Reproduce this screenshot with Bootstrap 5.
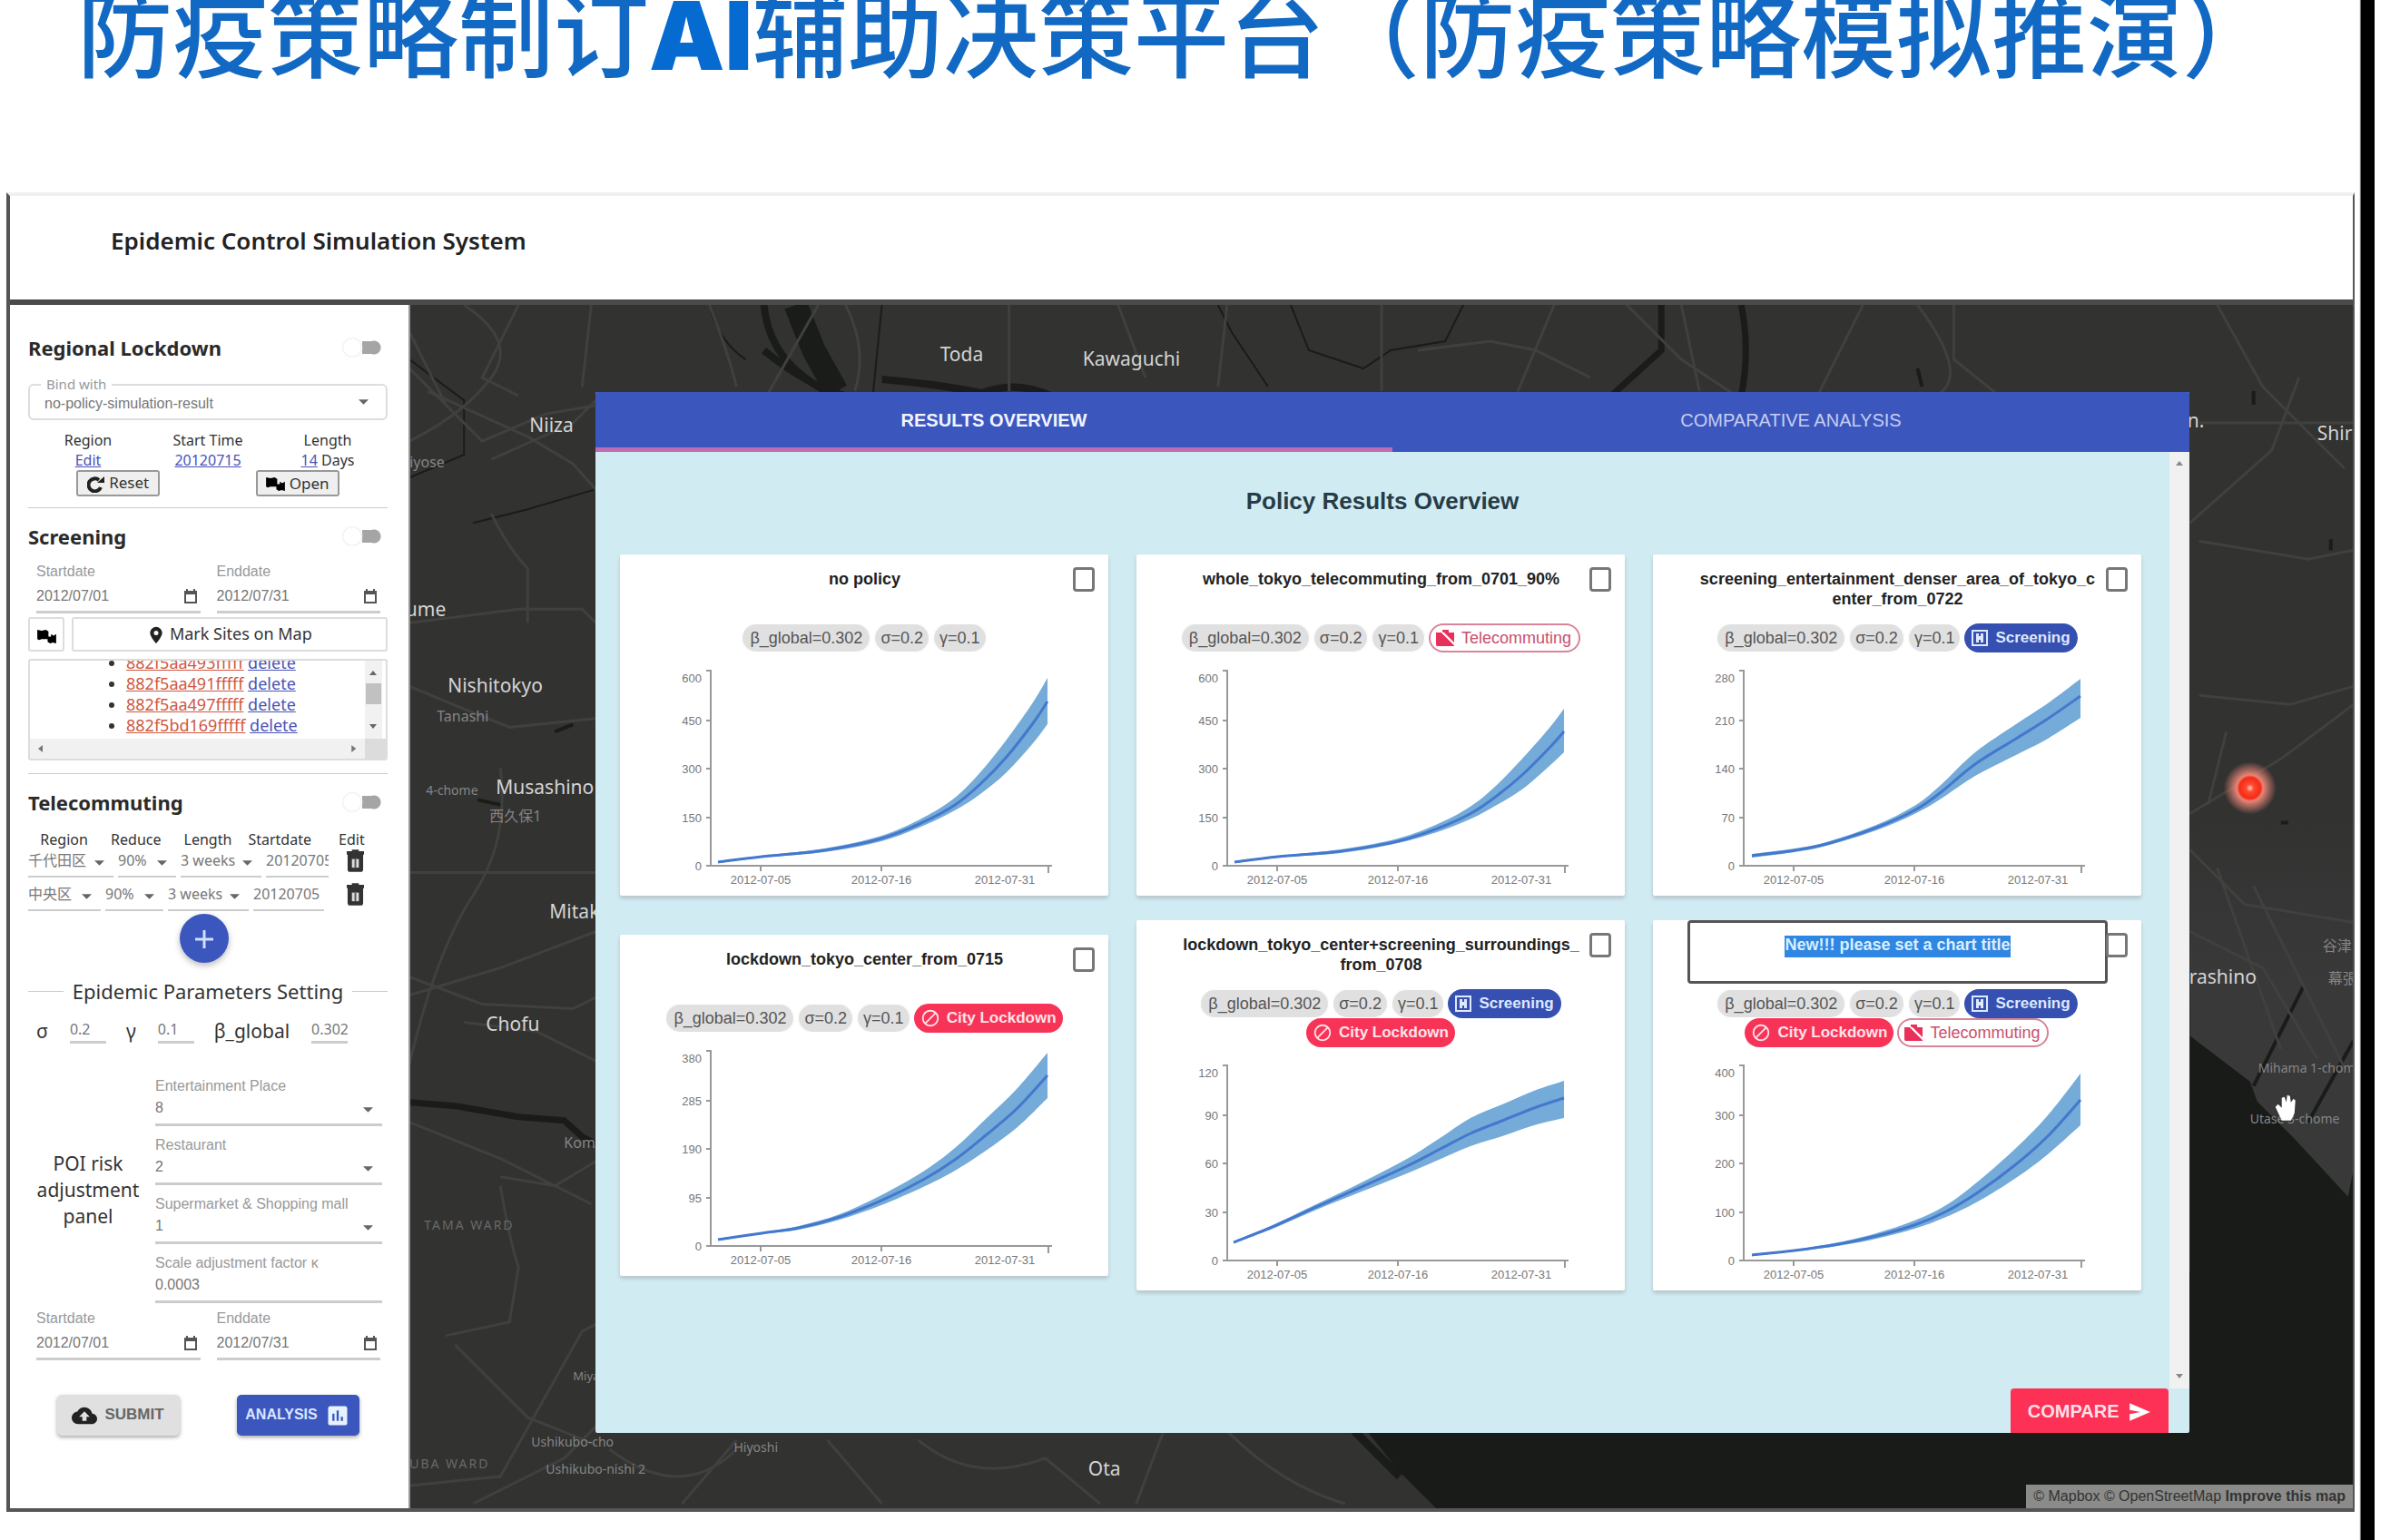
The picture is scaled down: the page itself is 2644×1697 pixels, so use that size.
<!DOCTYPE html>
<html lang="zh-CN">
<head>
<meta charset="utf-8">
<meta name="viewport" content="width=device-width, initial-scale=1">
<title>Epidemic Control Simulation System</title>
<link href="https://cdn.jsdelivr.net/npm/bootstrap@5.3.0/dist/css/bootstrap.min.css" rel="stylesheet">
<style>
:root{--indigo:#3b57be;--rose:#f73458;--ink:#333;--soft:#909090}
body{font-family:"Noto Sans","Noto Sans CJK JP",sans-serif;color:var(--ink);background:#fff}
.arial{font-family:"Liberation Sans","Noto Sans CJK JP",sans-serif}
.slide-edge{width:15px;background:#000;box-shadow:-1px 0 1px #777}
.slide-gutter{width:28px}
.slide-pad{padding:0 7px 31px}
.slide-title{height:212px;padding-left:78px;font-family:"Noto Sans CJK SC",sans-serif;font-size:105px;line-height:62px;font-weight:500;color:#1269c3;white-space:nowrap;margin:0}
.slide-title b{font-family:Inter,sans-serif;font-weight:900;color:#056bd0}
.app-frame{border:4px solid #555;border-top:4px solid #f0f0f0;border-right:2px solid #555}
.app-head{height:120px;padding:33px 111px 0;border-bottom:6px solid #4a4a4a}
.app-head h1{font-size:26px;line-height:32px;font-weight:600;color:#222;margin:0}
.side{width:441px;padding:32px 23px 0 20px;border-right:2px solid #999;background:#fff}
.side h2{font-size:22px;line-height:30px;font-weight:700;color:#2a2a2a;margin:0}
.side hr{margin:0;border-top:1px solid #ccc;opacity:1}
.tog{appearance:none;width:44px;height:22px;margin:0 6px 0 0;background:
 radial-gradient(circle at 11px 11px,#fff 9px,#f1f1f1 10px,transparent 12px),
 linear-gradient(#a5a5a5,#a5a5a5) 22px 4px/14px 14px no-repeat,
 radial-gradient(circle at 35px 11px,#a5a5a5 7px,transparent 8px)}
.bind{height:40px;border:2px solid #ddd;border-radius:6px;margin-top:25px}
.bind label{position:absolute;top:-13px;left:12px;padding:0 6px;background:#fff;font-size:15px;line-height:22px;color:#999}
.bind select{width:100%;height:36px;padding:4px 16px 0;font-size:16px}
select,.side input[type=text]{border:0;border-radius:0;background-color:transparent;color:#777;outline:0;min-width:0}
select{appearance:none;background:url("data:image/svg+xml,%3Csvg xmlns='http://www.w3.org/2000/svg' viewBox='0 0 12 6'%3E%3Cpath fill='%23666' d='M0 0h12L6 6z'/%3E%3C/svg%3E") no-repeat right 10px center/11px 6px}
.bind select{background-position:right 19px center}
.t16{font-size:16px;line-height:22px}
.side a{color:#4a52b8}
.raw-btn{height:29px;width:92px;font-size:17px;line-height:20px;background:#efefef;border:2px solid #999;border-radius:3px;padding:0;color:#333}
.flabel{font-size:16px;line-height:20px;color:#999;display:block}
.uline{border-bottom:3px solid #ccc!important}
.date-in{height:36px}
.date-in input,.poi-in{font-size:16px}
.tool-btn{height:38px;border:2px solid #ddd;border-radius:3px;background:#fff;font-size:18px;line-height:22px;color:#333}
.sites{height:112px;border:2px solid #ddd;border-radius:3px;display:grid;grid-template:1fr 22px/1fr 23px}
.sites ul{margin:-9px 0 0;padding-left:106px;font-size:18px;line-height:23px;color:#333;white-space:nowrap}
.sites ul a:first-child{color:#d0583f}
.bar-bg{background:#f1f1f1}
.thead5{display:grid;grid-template-columns:repeat(5,1fr);text-align:center;margin-top:15px}
.tele{height:31px;gap:5px;margin-bottom:6px;padding-right:26px}
.tele select,.tele input{height:31px;padding:0 0 5px;font-size:16px;border-bottom:2px solid #ccc!important}
.tele .w-r4{width:94px}.tele .w-r3{width:80px}.tele .w-p{width:64px}.tele .w-w{width:89px}.tele .w-d{width:69px}.tele .w-d2{width:78px}
.fab{width:54px;height:54px;border-radius:50%;background:var(--indigo);border:0;box-shadow:0 3px 7px #bbb;margin:-3px 0 0}
.split{font-size:22px;line-height:30px;gap:10px;margin-top:13px}
.split i{flex:1;height:1px;background:#ccc}
.parm{margin-top:14px;height:30px;font-size:21px;line-height:30px;padding-left:9px}
.parm input{width:40px;height:29px;padding:0;font-size:16px;margin:0 22px 0 24px}
.poi{margin-top:36px;padding-right:6px}
.poi-name{width:132px;margin-right:8px;font-size:21px;line-height:29px}
.poi-in{height:34px;width:100%;padding:0 0 4px}
.act{height:45px;width:135px;border:0;border-radius:5px;font-size:17px;line-height:20px;font-weight:700;box-shadow:0 2px 4px #aaa}
.map{background:#323231;padding:96px 180px 83px 204px}
.map-art{position:absolute;inset:0;width:100%;height:100%}
.dialog{background:#d1ebf3;border-radius:2px;overflow:hidden}
.tabs{height:66px;background:var(--indigo);font-family:"Liberation Sans",sans-serif}
.tabs button{flex:1;background:none;border:0;border-bottom:5px solid transparent;color:#c6cdf0;font-size:20px;line-height:24px;padding:0}
.tabs .on{border-color:#c06cb4;color:#f2f4ff;font-weight:700}
.over-title{font-family:"Liberation Sans",sans-serif;font-size:26px;line-height:34px;font-weight:700;color:#263c46;margin:37px 0 42px;text-align:center}
.deck{padding:0 31px 0 27px}
.deck .row{--bs-gutter-x:31px;--bs-gutter-y:27px}
.plan{background:#fff;border-radius:2px;box-shadow:0 3px 4px #b5c3c6}
.plan-name{width:463px;height:70px;margin:0 0 6px 38px;padding:16px 6px 0;font-family:"Liberation Sans",sans-serif;font-size:18px;line-height:22px;font-weight:700;color:#222;text-align:center;flex:none}
.plan-name.editing{border:3px solid #555;border-radius:4px;padding:13px 7px 0;outline:0}
.plan-name.editing span{background:#2f86e3;color:#d9efff;padding-bottom:4px}
.pick{appearance:none;width:24px;height:27px;margin:14px 16px 0 -2px;border:3px solid #777;border-radius:4px;background:#fff;flex:none}
.chip{display:inline-flex;align-items:center;height:32px;border-radius:16px;padding:0 7px;font-size:18px;line-height:22px;background:#e0e0e0;color:#555;box-shadow:inset 0 0 0 1px #fff}
.chip svg{margin-right:7px}
.chip.scr{background:#3550b0;color:#dfe8ff;font-weight:700;font-size:17px;box-shadow:none;padding-right:8px}
.chip.loc{background:var(--rose);color:#ffe3e8;font-weight:700;font-size:17px;box-shadow:none}
.chip.tel{background:#fff;color:#c9506d;box-shadow:inset 0 0 0 2px #d98498;padding-right:10px}
.chips{gap:0 4px}
.chips .chip:first-child{padding:0 9px}
.plot text{font:13px "Liberation Sans",sans-serif;fill:#777}
.rail{width:22px;flex:none;background:#f1f1f1;padding:9px 0}
.compare{width:174px;height:49px;margin-right:23px;border:0;border-radius:4px 4px 0 0;background:#fc3155;color:#ffdfe6;font-family:"Liberation Sans",sans-serif;font-weight:700;font-size:20px}
.attrib{position:absolute;right:0;bottom:0;height:26px;padding:0 8px;background:#8b8b89;color:#333;font-size:16px;line-height:26px}
.attrib a{color:inherit;text-decoration:none}
.map-art text{font-family:"Noto Sans","Noto Sans CJK JP",sans-serif}
</style>
</head>
<body>
<svg width="0" height="0" class="position-absolute" aria-hidden="true">
<symbol id="chat" viewBox="0 0 22 18"><path d="M0 1l5 1 5-1 3 2v6h3V6l3 2 3-2v11l-4-1-3 1-3-2v-3H5l-3 1-2-1z"/></symbol>
<symbol id="cal" viewBox="0 0 14 16"><path d="M2 0h2v2h6V0h2v2h2v14H0V2h2zM2 6v8h10V6z" fill-rule="evenodd"/></symbol>
<symbol id="bin" viewBox="0 0 20 26"><path fill="#333" d="M6 0h8v2h6v4H0V2h6zM1 6h18v17q0 3-3 3H4q-3 0-3-3z"/><path fill="#ddd" d="M6 11h8v10H6z"/><path stroke="#555" stroke-width="2" d="M10 11v10"/></symbol>
<symbol id="med" viewBox="0 0 20 20"><path fill="none" stroke="#dfe8ff" stroke-width="2" d="M2 2h16v16H2z"/><path fill="#dfe8ff" d="M6 5h3v3h2V5h3v10h-3v-3H9v3H6z"/></symbol>
<symbol id="blk" viewBox="0 0 24 24"><path fill="#ffe3e8" d="M12 2C6.48 2 2 6.48 2 12s4.48 10 10 10 10-4.48 10-10S17.520 2 12 2zM4 12c0-4.420 3.580-8 8-8 1.850 0 3.550.630 4.900 1.690L5.690 16.900C4.630 15.550 4 13.850 4 12zm8 8c-1.850 0-3.550-.630-4.900-1.690L18.310 7.100C19.370 8.450 20 10.150 20 12c0 4.420-3.580 8-8 8z"/></symbol>
<symbol id="off" viewBox="0 0 22 20"><path fill="#e8305a" d="M1 4h6l14 14v1H2q-1-1-1-2zM8 1h7v3h6v11L10 4H8z"/><path stroke="#fff" stroke-width="1.500" d="M4 0l18 18"/></symbol>
</svg>

<div class="d-flex min-vh-100">
<main class="slide-pad flex-grow-1 d-flex flex-column overflow-hidden">
 <p class="slide-title">防疫策略制订<b>AI</b>辅助决策平台（防疫策略模拟推演）</p>
 <div class="app-frame flex-grow-1 d-flex flex-column">
  <header class="app-head"><h1>Epidemic Control Simulation System</h1></header>
  <div class="d-flex flex-grow-1">

  <aside class="side flex-shrink-0">
   <div class="d-flex justify-content-between align-items-center"><h2>Regional Lockdown</h2><input type="checkbox" class="tog" aria-label="Regional Lockdown"></div>
   <div class="bind position-relative"><label for="bind">Bind with</label><select id="bind" class="arial"><option>no-policy-simulation-result</option></select></div>
   <div class="row g-0 text-center t16" style="margin-top:11px">
    <div class="col">Region<br><a href="#">Edit</a></div>
    <div class="col">Start Time<br><a href="#">20120715</a></div>
    <div class="col">Length<br><a href="#">14</a> Days</div>
   </div>
   <div class="row g-0 text-center mb-2 pb-1">
    <div class="col"><button class="raw-btn"><svg width="20" height="18" viewBox="0 0 20 18"><path d="M15 12a7 7 0 1 1-2-8" fill="none" stroke="#222" stroke-width="4"/><path d="M11 7h8V0z" fill="#222"/></svg> Reset</button></div>
    <div class="col"><button class="raw-btn"><svg width="21" height="17"><use href="#chat"/></svg> Open</button></div>
   </div>
   <hr>
   <div class="d-flex justify-content-between align-items-center mt-3"><h2>Screening</h2><input type="checkbox" class="tog" aria-label="Screening"></div>
   <div class="d-flex arial" style="gap:18px;padding:14px 8px 0 9px">
    <div class="w-50"><label class="flabel" for="s1">Startdate</label><div class="date-in uline d-flex align-items-center"><input type="text" id="s1" class="w-100 p-0" value="2012/07/01"><svg width="14" height="16" class="flex-shrink-0 me-1" fill="#555"><use href="#cal"/></svg></div></div>
    <div class="w-50"><label class="flabel" for="s2">Enddate</label><div class="date-in uline d-flex align-items-center"><input type="text" id="s2" class="w-100 p-0" value="2012/07/31"><svg width="14" height="16" class="flex-shrink-0 me-1" fill="#555"><use href="#cal"/></svg></div></div>
   </div>
   <div class="d-flex gap-2 mb-2 pt-1">
    <button class="tool-btn p-0" style="width:40px" aria-label="Comments"><svg width="21" height="17"><use href="#chat"/></svg></button>
    <button class="tool-btn flex-grow-1"><svg width="20" height="22" viewBox="0 0 24 24" fill="#222"><path d="M12 1C8 1 4 5 4 9c0 5 8 14 8 14s8-9 8-14c0-4-4-8-8-8zm0 11a3 3 0 1 1 0-6 3 3 0 0 1 0 6z"/></svg> Mark Sites on Map</button>
   </div>
   <div class="sites">
    <div class="overflow-hidden"><ul>
     <li><a href="#">882f5aa493fffff</a> <a href="#">delete</a></li>
     <li><a href="#">882f5aa491fffff</a> <a href="#">delete</a></li>
     <li><a href="#">882f5aa497fffff</a> <a href="#">delete</a></li>
     <li><a href="#">882f5bd169fffff</a> <a href="#">delete</a></li></ul></div>
    <svg class="bar-bg" width="19" height="86" fill="#666"><path d="M5 16h8l-4-5zM5 70h8l-4 5z"/><path fill="#c1c1c1" d="M1 25h17v23H1z"/></svg>
    <svg class="bar-bg" width="100%" height="22" fill="#777"><path d="M14 7v8l-5-4z"/><svg x="96%" overflow="visible"><path d="M0 7v8l5-4z"/></svg></svg>
    <div style="background:#dcdcdc"></div>
   </div>
   <hr style="margin-top:14px">
   <div class="d-flex justify-content-between align-items-center mt-3"><h2>Telecommuting</h2><input type="checkbox" class="tog" aria-label="Telecommuting"></div>
   <div class="thead5 t16"><span>Region</span><span>Reduce</span><span>Length</span><span>Startdate</span><span>Edit</span></div>
   <div class="tele d-flex"><select class="w-r4" aria-label="Region"><option>千代田区</option></select><select class="w-p" aria-label="Reduce"><option>90%</option></select><select class="w-w" aria-label="Length"><option>3 weeks</option></select><input type="text" class="w-d" aria-label="Startdate" value="20120705"><svg class="ms-auto" width="19" height="25"><use href="#bin"/></svg></div>
   <div class="tele d-flex"><select class="w-r3" aria-label="Region"><option>中央区</option></select><select class="w-p" aria-label="Reduce"><option>90%</option></select><select class="w-w" aria-label="Length"><option>3 weeks</option></select><input type="text" class="w-d2" aria-label="Startdate" value="20120705"><svg class="ms-auto" width="19" height="25"><use href="#bin"/></svg></div>
   <div class="text-center pe-2" style="height:54px"><button class="fab" aria-label="Add"><svg width="22" height="22" stroke="#cfe0ff" stroke-width="3"><path d="M11 1v20M1 11h20"/></svg></button></div>
   <div class="split d-flex align-items-center"><i></i>Epidemic Parameters Setting<i></i></div>
   <div class="parm d-flex"><label for="ps">σ</label><input class="uline" type="text" id="ps" value="0.2"><label for="pg">γ</label><input class="uline" type="text" id="pg" value="0.1"><label for="pb">β_global</label><input class="uline" type="text" id="pb" value="0.302"></div>
   <div class="poi d-flex align-items-center">
    <div class="poi-name text-center flex-shrink-0">POI risk adjustment panel</div>
    <div class="flex-grow-1 d-flex flex-column arial" style="gap:11px">
     <div><label class="flabel" for="p1">Entertainment Place</label><select id="p1" class="poi-in uline"><option>8</option></select></div>
     <div><label class="flabel" for="p2">Restaurant</label><select id="p2" class="poi-in uline"><option>2</option></select></div>
     <div><label class="flabel" for="p3">Supermarket &amp; Shopping mall</label><select id="p3" class="poi-in uline"><option>1</option></select></div>
     <div><label class="flabel" for="p4">Scale adjustment factor κ</label><input type="text" id="p4" class="poi-in uline d-block" value="0.0003"></div>
    </div>
   </div>
   <div class="d-flex arial" style="gap:18px;padding:7px 8px 0 9px">
    <div class="w-50"><label class="flabel" for="e1">Startdate</label><div class="date-in uline d-flex align-items-center"><input type="text" id="e1" class="w-100 p-0" value="2012/07/01"><svg width="14" height="16" class="flex-shrink-0 me-1" fill="#555"><use href="#cal"/></svg></div></div>
    <div class="w-50"><label class="flabel" for="e2">Enddate</label><div class="date-in uline d-flex align-items-center"><input type="text" id="e2" class="w-100 p-0" value="2012/07/31"><svg width="14" height="16" class="flex-shrink-0 me-1" fill="#555"><use href="#cal"/></svg></div></div>
   </div>
   <div class="row g-0 text-center arial" style="margin-top:38px">
    <div class="col"><button class="act" style="background:#e0e0e0;color:#666"><svg width="28" height="28" viewBox="0 0 24 24" fill="#222" class="me-2"><path d="M19.350 10.040C18.670 6.590 15.640 4 12 4 9.110 4 6.600 5.640 5.350 8.040 2.340 8.360 0 10.910 0 14c0 3.310 2.690 6 6 6h13c2.760 0 5-2.240 5-5 0-2.640-2.050-4.780-4.650-4.960zM14 13v4h-4v-4H7l5-5 5 5h-3z"/></svg>SUBMIT</button></div>
    <div class="col"><button class="act px-0" style="background:var(--indigo);color:#dbe5ff;font-size:16px">ANALYSIS<svg width="28" height="28" viewBox="0 0 24 24" fill="#e6f2ff" class="ms-2"><path d="M19 3H5c-1.100 0-2 .900-2 2v14c0 1.100.900 2 2 2h14c1.100 0 2-.900 2-2V5c0-1.100-.900-2-2-2zM9 17H7v-7h2v7zm4 0h-2V7h2v10zm4 0h-2v-4h2v4z"/></svg></button></div>
   </div>
  </aside>

  <section class="map flex-grow-1 position-relative d-flex overflow-hidden">
   <svg class="map-art" viewBox="0 0 2140 1325" preserveAspectRatio="xMidYMid slice">
    <linearGradient id="east" x2="0" y2="1"><stop offset="0" stop-color="#323231"/><stop offset=".4" stop-color="#393939"/></linearGradient>
    <path fill="url(#east)" d="M1960 560h181v460h-20l-160-210z"/>
    <path fill="#181b18" d="M1960 805l66 50 8 22 40 40 60 65 7-35v378H1130l-40-40-40-50 60-70 850-100z"/>
    <g fill="none" stroke="#1a1c1a">
     <path stroke-width="8" d="M390 0q5 50 45 80t60 20"/><path stroke-width="26" d="M425 0l20 50 25 45"/><path stroke-width="8" d="M390 50q50 40 90 50M520 82q60 5 110 15q40-15 80 5"/>
     <path stroke-width="7" d="M1378 0v50l-55 50M1466 0q10 50 0 100"/><path stroke-width="2" d="M330 0q10 40 40 60M520 0l-10 100M890 0l15 30 40 60M970 0l20 50 60 20 30-20 60-10 30-60"/><path stroke-width="4" d="M1660 70l5 20M2030 110v-15M2115 270v-12M2060 570h8"/>
     <path stroke-width="7" d="M0 878l50 4 70 12 50 4 20 18 15 8"/><path stroke-width="4" d="M75 545l28 6M160 470l20-8"/><path stroke-width="2" d="M0 190l60-25v-60L0 60M70 240l60-15 75-22"/><path stroke-width="4" d="M2030 860l55-110M2090 900l50-90"/>
     <path stroke-width="9" d="M1040 1240l50 50"/>
    </g>
    <g fill="none" stroke="#40403e" stroke-width="3">
     <path d="M20 95l110 50 50 30 40 45M0 70l80 80 70-30 60-10M90 170l90-40 30-30M90 230q20 40 40 60v60M60 0q60 40 30 80T0 150M0 30q30 60 40 80M120 0l-40 80 40 20M200 0l-10 90M330 0q20 50 30 90M450 0L395 97M480 0q25 50 10 95M660 0v95M780 0l30 80M900 0l-10 90"/>
     <path d="M0 420l60 25 50 20 100-10M0 625h205M100 510q10 80-30 140T0 835M0 760l100-30 105-40M0 740l80 30 100 5 30-15M60 790l80 10 70 35M0 900l100 40 100 50M100 960l60 10 50-30M100 970q10 60 20 90l-10 60-70 15M50 1145l80 80 75 30M0 1300l100-10 90-160 20-10M70 1320l100-50 40-40M0 350l120-15h70l20 20"/>
     <path d="M1070 0v95M1110 50l80-10 50 10 60 30M1260 0l-40 95M1340 0l60 60 60 40M1400 0l20 95M1600 0l-50 100M1660 0q60 80 20 100M1700 0v60l50 40M1990 0l50 90 90 90M1960 240l90-80 30-80M1970 260l120 20 50-10M1960 560l100-60 80-60M1960 600l60 60 120 20M1960 690l80 40 60 100M1990 620l70 200M2030 640l100 200M1970 130h170M1970 430l100 10 70-20M2000 470l-20 80"/>
     <path d="M220 1260q80 60 140 0M300 1320l60-70M460 1250l60 70M560 1250q60 50 140 20l60 50M830 1240l-30 80M900 1240q60 60 130 80"/>
    </g>
    <g fill="#d4d4d4" font-size="21"><text x="584" y="62">Toda</text><text x="741" y="67">Kawaguchi</text><text x="132" y="140">Niiza</text><text x="-13" y="343">rume</text><text x="42" y="427">Nishitokyo</text><text x="95" y="539">Musashino</text><text x="154" y="675">Mitaka</text><text x="84" y="799">Chofu</text><text x="2100" y="149">Shiroi</text><text x="1959" y="747">rashino</text><text x="747" y="1289">Ota</text><text x="1957" y="135">n.</text></g>
    <g fill="#858585" font-size="16"><text x="0" y="179">iyose</text><text x="30" y="459">Tanashi</text><text x="18" y="540" font-size="14">4-chome</text><text x="88" y="569">西久保1</text><text x="170" y="928">Komae</text><text x="180" y="1184" font-size="13">Miyamae</text><text x="134" y="1257" font-size="14">Ushikubo-cho</text><text x="150" y="1287" font-size="14">Ushikubo-nishi 2</text><text x="357" y="1263" font-size="14">Hiyoshi</text><text x="2106" y="711">谷津1</text><text x="2112" y="747">幕張</text><text x="2035" y="845" font-size="14">Mihama 1-chome</text><text x="2026" y="901" font-size="14">Utase 3-chome</text></g>
    <g fill="#696969" font-size="14" letter-spacing="2"><text x="16" y="1018">TAMA WARD</text><text x="0" y="1281">UBA WARD</text></g>
    <radialGradient id="glow"><stop offset="0" stop-color="#ffd0c0"/><stop offset=".15" stop-color="#ff4a30"/><stop offset=".4" stop-color="#f52a16"/><stop offset=".5" stop-color="#e98476"/><stop offset="1" stop-color="#e98476" stop-opacity="0"/></radialGradient>
    <circle cx="2026" cy="532" r="29" fill="url(#glow)"/>
    <path fill="#fff" d="M2054 883l3-3 4 4v-11l3-1 2 6 1-8 3 1 1 7 3-4 2 2-1 14-4 8h-10z"/>
   </svg>

   <div class="dialog flex-grow-1 position-relative d-flex flex-column">
    <nav class="tabs d-flex"><button class="on">RESULTS OVERVIEW</button><button>COMPARATIVE ANALYSIS</button></nav>
    <div class="d-flex flex-grow-1">
     <div class="flex-grow-1">
      <h2 class="over-title">Policy Results Overview</h2>
      <div class="deck"><div class="row row-cols-3 align-items-center">
       <div class="col"><article class="plan"><div class="d-flex"><div class="plan-name">no policy</div><input class="pick" type="checkbox" aria-label="no policy"></div>
        <div class="chips arial d-flex flex-wrap justify-content-center"><span class="chip">β_global=0.302</span><span class="chip">σ=0.2</span><span class="chip">γ=0.1</span></div><svg class="plot d-block w-100" viewBox="0 0 538 268" data-plan="0"></svg></article></div>
       <div class="col"><article class="plan"><div class="d-flex"><div class="plan-name">whole_tokyo_telecommuting_from_0701_90%</div><input class="pick" type="checkbox" aria-label="whole tokyo telecommuting"></div>
        <div class="chips arial d-flex flex-wrap justify-content-center"><span class="chip">β_global=0.302</span><span class="chip">σ=0.2</span><span class="chip">γ=0.1</span><span class="chip tel"><svg width="22" height="20"><use href="#off"/></svg>Telecommuting</span></div><svg class="plot d-block w-100" viewBox="0 0 538 268" data-plan="1"></svg></article></div>
       <div class="col"><article class="plan"><div class="d-flex"><div class="plan-name">screening_entertainment_denser_area_of_tokyo_c<wbr>enter_from_0722</div><input class="pick" type="checkbox" aria-label="screening entertainment"></div>
        <div class="chips arial d-flex flex-wrap justify-content-center"><span class="chip">β_global=0.302</span><span class="chip">σ=0.2</span><span class="chip">γ=0.1</span><span class="chip scr"><svg width="20" height="20"><use href="#med"/></svg>Screening</span></div><svg class="plot d-block w-100" viewBox="0 0 538 268" data-plan="2"></svg></article></div>
       <div class="col"><article class="plan"><div class="d-flex"><div class="plan-name">lockdown_tokyo_center_from_0715</div><input class="pick" type="checkbox" aria-label="lockdown tokyo center"></div>
        <div class="chips arial d-flex flex-wrap justify-content-center"><span class="chip">β_global=0.302</span><span class="chip">σ=0.2</span><span class="chip">γ=0.1</span><span class="chip loc"><svg width="22" height="24"><use href="#blk"/></svg>City Lockdown</span></div><svg class="plot d-block w-100" viewBox="0 0 538 268" data-plan="3"></svg></article></div>
       <div class="col"><article class="plan"><div class="d-flex"><div class="plan-name">lockdown_tokyo_center+screening_surroundings_<wbr>from_0708</div><input class="pick" type="checkbox" aria-label="lockdown and screening"></div>
        <div class="chips arial d-flex flex-wrap justify-content-center"><span class="chip">β_global=0.302</span><span class="chip">σ=0.2</span><span class="chip">γ=0.1</span><span class="chip scr"><svg width="20" height="20"><use href="#med"/></svg>Screening</span><span class="chip loc"><svg width="22" height="24"><use href="#blk"/></svg>City Lockdown</span></div><svg class="plot d-block w-100" viewBox="0 0 538 268" data-plan="4"></svg></article></div>
       <div class="col"><article class="plan"><div class="d-flex"><div class="plan-name editing" contenteditable="true" role="textbox" aria-label="Chart title"><span>New!!! please set a chart title</span></div><input class="pick" type="checkbox" aria-label="new chart"></div>
        <div class="chips arial d-flex flex-wrap justify-content-center"><span class="chip">β_global=0.302</span><span class="chip">σ=0.2</span><span class="chip">γ=0.1</span><span class="chip scr"><svg width="20" height="20"><use href="#med"/></svg>Screening</span><span class="chip loc"><svg width="22" height="24"><use href="#blk"/></svg>City Lockdown</span><span class="chip tel"><svg width="22" height="20"><use href="#off"/></svg>Telecommuting</span></div><svg class="plot d-block w-100" viewBox="0 0 538 268" data-plan="5"></svg></article></div>
      </div></div>
     </div>
     <div class="rail d-flex flex-column justify-content-between align-items-center"><svg width="8" height="8" fill="#888"><path d="M0 6h8L4 1z"/></svg><svg width="8" height="8" fill="#888"><path d="M0 1h8L4 6z"/></svg></div>
    </div>
    <button class="compare align-self-end">COMPARE <svg width="26" height="26" viewBox="0 0 24 24" fill="#fff" class="ms-1"><path d="M2 21L23 12 2 3v7l11 2-11 2z"/></svg></button>
   </div>
   <div class="attrib arial"><a href="#">© Mapbox</a> <a href="#">© OpenStreetMap</a> <a href="#"><b>Improve this map</b></a></div>
  </section>
  </div>
 </div>
</main>
<div class="slide-edge flex-shrink-0"></div><div class="slide-gutter flex-shrink-0"></div>
</div>

<script src="https://cdn.jsdelivr.net/npm/bootstrap@5.3.0/dist/js/bootstrap.bundle.min.js"></script>
<script>
// Each point: x, median, height above it, depth below it.
const plans = [
 {y:[600,450,300,150,0], p:[[108,231,1,1],[156,225,1,1],[225,218,2,2],[288,205,3,3],[334,187,5,4],[369,168,8,6],[397,145,13,11],[426,115,19,17],[455,78,23,22],[471,54,26,25]]},
 {y:[600,450,300,150,0], p:[[108,231,1,1],[156,225,1,1],[225,219,2,2],[288,208,3,2],[334,193,5,4],[369,177,8,6],[397,158,12,10],[426,134,18,16],[455,105,22,20],[471,87,25,23]]},
 {y:[280,210,140,70,0], p:[[109,224,2,2],[156,218,2,2],[191,211,2,2],[246,193,3,3],[288,174,5,4],[316,155,8,7],[355,123,13,13],[400,95,16,18],[435,73,17,22],[471,48,19,24]]},
 {y:[380,285,190,95,0], p:[[108,228,1,1],[156,221,1,1],[197,215,2,2],[242,203,3,3],[288,185,6,5],[334,162,9,8],[369,140,13,12],[403,113,18,17],[438,83,22,21],[471,47,25,25]]},
 {y:[120,90,60,30,0], p:[[107,215,1,1],[150,198,2,2],[196,177,3,3],[248,154,5,5],[298,131,8,8],[333,113,12,11],[368,95,17,14],[403,81,18,17],[438,67,19,19],[471,56,19,22]]},
 {y:[400,300,200,100,0], p:[[109,229,1,1],[156,224,1,1],[204,217,2,2],[246,208,3,3],[288,196,5,4],[323,181,7,6],[358,160,12,10],[400,129,18,15],[435,98,23,20],[471,58,29,28]]}];
const smooth = a => a.slice(0,-1).map((p,i) => {
  const o = a[i-1]||p, q = a[i+1], r = a[i+2]||q;
  return `C${p[0]+(q[0]-o[0])/6} ${p[1]+(q[1]-o[1])/6} ${q[0]-(r[0]-p[0])/6} ${q[1]-(r[1]-p[1])/6} ${q[0]} ${q[1]}`;
}).join('');
document.querySelectorAll('.plot').forEach(s => {
  const d = plans[s.dataset.plan], up = d.p.map(v=>[v[0],v[1]-v[2]]), lo = d.p.map(v=>[v[0],v[1]+v[3]]).reverse();
  const ty = [28,75,128,182,235];
  s.innerHTML = `<path fill="#74abd8" d="M${up[0]}${smooth(up)}L${lo[0]}${smooth(lo)}Z"/>
   <path fill="none" stroke="#4378cd" stroke-width="3" d="M${d.p[0].slice(0,2)}${smooth(d.p)}"/>
   <path fill="none" stroke="#999" stroke-width="2" d="M95 20h5V235H476M95 75h5M95 128h5M95 182h5M95 235h5M155 235v6M288 235v6M472 235v8"/>`
   + d.y.map((t,i)=>`<text x="90" y="${ty[i]+5}" text-anchor="end">${t}</text>`).join('')
   + [[155,'05'],[288,'16'],[424,'31']].map(t=>`<text x="${t[0]}" y="255" text-anchor="middle">2012-07-${t[1]}</text>`).join('');
});
</script>
</body>
</html>
